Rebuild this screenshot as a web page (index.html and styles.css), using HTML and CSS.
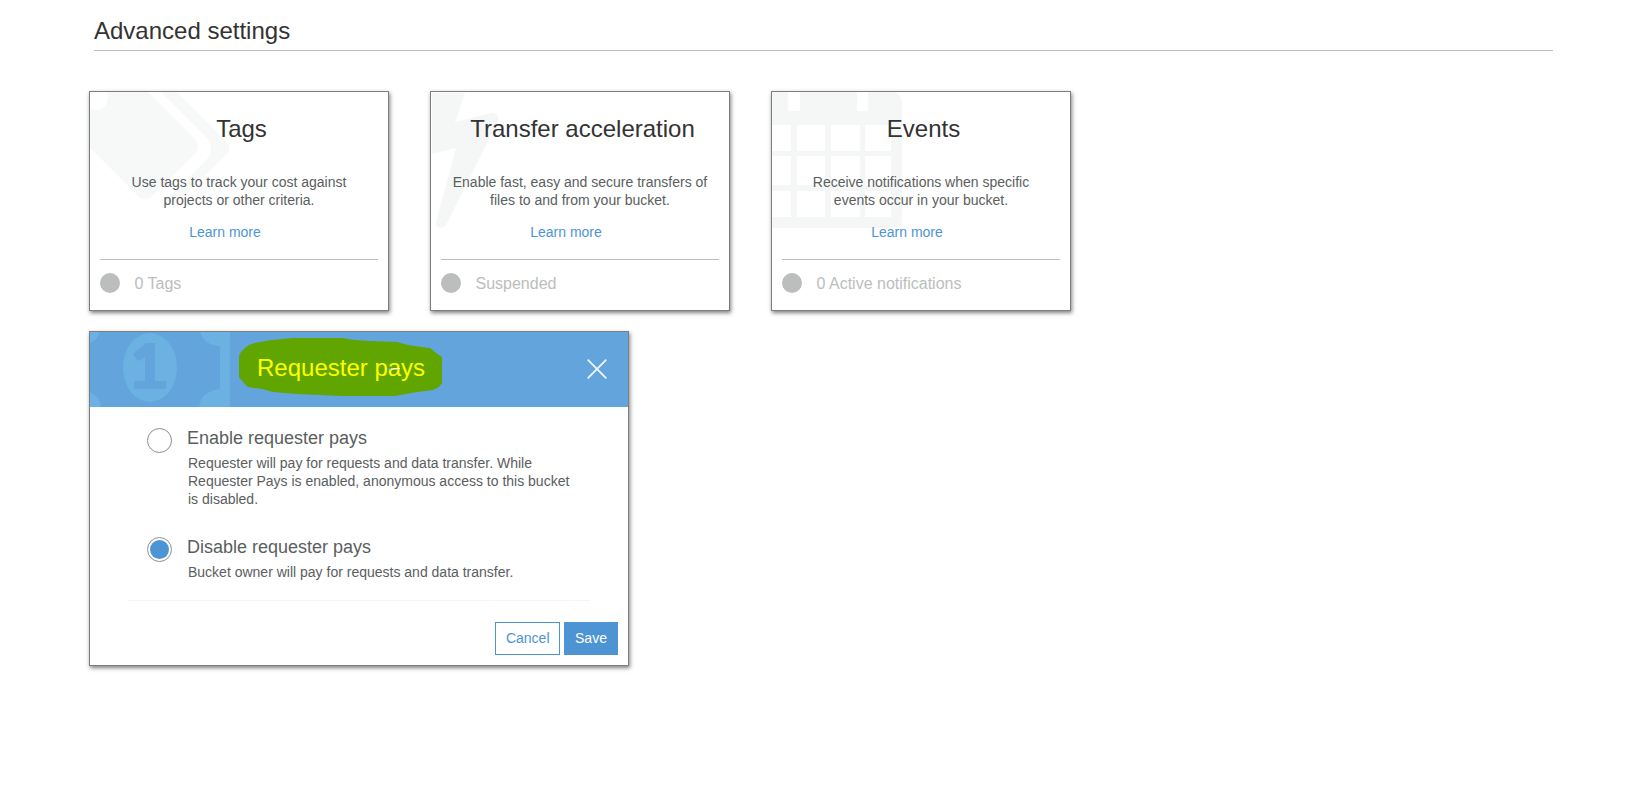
FILE: index.html
```html
<!DOCTYPE html>
<html lang="en">
<head>
<meta charset="utf-8">
<title>Advanced settings</title>
<link rel="stylesheet" href="styles.css">
</head>
<body>
<main class="page">
  <h1 class="heading">Advanced settings</h1>
  <section class="cards">
    <article class="card">
      <svg class="art" width="140" height="140" viewBox="0 0 140 140" fill="#f7f9f8">
        <path d="M0 15Q3 18 8 18A10 13 0 0 0 17 0H58L104 46Q112 54 104 63L62 104Q55 111 48 104L0 56Z"/>
        <path d="M71 0H87L136 49Q143 56 136 63L92 106Q81 117 69 110L74 106Q79 105 84 100L117 67Q125 58 117 46Z"/>
      </svg>
      <h2 class="title">Tags</h2>
      <p class="text">Use tags to track your cost against<br>projects or other criteria.</p>
      <a class="more">Learn more</a>
      <footer class="status"><span class="dot"></span><span class="state">0 Tags</span></footer>
    </article>
    <article class="card">
      <svg class="art" width="140" height="140" viewBox="0 0 140 140" fill="#f5f7f6">
        <path d="M1 1H34L24 30L60 21Q70 21 66 31L15 133Q11 138 5 134L5 130L25 56L1 62Z"/>
      </svg>
      <h2 class="title">Transfer acceleration</h2>
      <p class="text">Enable fast, easy and secure transfers of<br>files to and from your bucket.</p>
      <a class="more">Learn more</a>
      <footer class="status"><span class="dot"></span><span class="state">Suspended</span></footer>
    </article>
    <article class="card">
      <svg class="art" width="140" height="140" viewBox="0 0 140 140">
        <path fill="#f5f7f6" d="M0 0H122Q130 2 130 11V128Q130 135 122 136H0Z"/>
        <path fill="#fff" d="M16 0H28V17Q28 19 26 19H18Q16 19 16 17ZM85 0H96V17Q96 19 94 19H87Q85 19 85 17ZM0 33H19V59H0ZM25 33H53V59H25ZM59 33H88V59H59ZM93 33H119V59H93ZM0 64H19V93H0ZM25 64H53V93H25ZM59 64H88V93H59ZM93 64H119V93H93ZM0 99H19V125H0ZM25 99H53V125H25ZM59 99H88V125H59ZM93 99H119V125H93Z"/>
      </svg>
      <h2 class="title">Events</h2>
      <p class="text">Receive notifications when specific<br>events occur in your bucket.</p>
      <a class="more">Learn more</a>
      <footer class="status"><span class="dot"></span><span class="state">0 Active notifications</span></footer>
    </article>
  </section>
  <section class="panel">
    <header class="panel-head">
      <svg class="art" width="400" height="75" viewBox="0 0 400 75">
        <g fill="#6bb1e1">
          <path d="M0 0H10Q7 9 0 11ZM0 60Q10 64 11 75H0ZM110 0H140V75H109Q111 59 130 57V14Q115 14 110 0Z"/>
          <ellipse cx="60" cy="35.500" rx="27" ry="34.500"/>
        </g>
        <path fill="#62a4db" d="M56 11H65V49H76V57H44V49H55V25L48 29L43 22Z"/>
        <path fill="#60a500" d="M149 24L151 20L155 16L159 13L165 11L182 8L203 6H253L264 8L280 9L307 10L318 13L331 15L340 16L346 21L352 25V51L349 55L343 58L327 60L305 64H253L230 63L207 62L183 60L172 57L158 55L153 50L149 45Z"/>
      </svg>
      <h2 class="panel-title">Requester pays</h2>
      <svg class="mark" width="16" height="4" viewBox="0 0 16 4"><path d="M1 2L7 1.500" stroke="#62a4db"/><path d="M5 2L14 1.500" stroke="#fff"/></svg>
      <svg class="close" width="20" height="20" viewBox="0 0 20 20"><path d="M.7 .7L19.300 19.300M19.300 .7L.7 19.300" stroke="#fff" stroke-opacity=".9" stroke-width="1.800"/></svg>
    </header>
    <div class="options">
      <div class="option">
        <span class="radio"></span>
        <div>
          <div class="label">Enable requester pays</div>
          <p class="note">Requester will pay for requests and data transfer. While<br>Requester Pays is enabled, anonymous access to this bucket<br>is disabled.</p>
        </div>
      </div>
      <div class="option">
        <span class="radio checked"></span>
        <div>
          <div class="label">Disable requester pays</div>
          <p class="note">Bucket owner will pay for requests and data transfer.</p>
        </div>
      </div>
    </div>
    <footer class="actions"><button class="btn">Cancel</button><button class="btn primary">Save</button></footer>
  </section>
</main>
</body>
</html>
```
FILE: styles.css
```css
* { box-sizing: border-box; }
body { margin: 0; background: #fff; color: #5a5e60; font: 14px/18px "Liberation Sans", Arial, sans-serif; }
h1, h2, p { margin: 0; font-weight: 400; }
.page { min-height: 100vh; padding: 17px 76px 0 89px; }
.heading { margin-left: 5px; height: 34px; border-bottom: 1px solid #bbbebd; font-size: 24px; line-height: 28px; color: #333; }
.cards { display: flex; gap: 41px; margin-top: 40px; }
.card, .panel { position: relative; border: 1px solid #7c7f7e; background: #fff; box-shadow: 1px 2px 4px rgba(0, 0, 0, .5); }
.card { width: 300px; height: 220px; padding: 23px 10px 0; display: flex; flex-direction: column; }
.art { position: absolute; left: 0; top: 0; }
.title { position: relative; padding-left: 5px; text-align: center; font-size: 24px; line-height: 28px; color: #333; }
.text { position: relative; margin-top: 30px; text-align: center; }
.more { position: relative; margin-top: 14px; padding-right: 28px; text-align: center; color: #4d94d4; }
.status { display: flex; align-items: flex-start; gap: 14.5px; margin-top: 18px; padding-top: 13px; border-top: 1px solid #bbbebd; font-size: 16px; line-height: 20px; color: #bbbebd; }
.dot { width: 20px; height: 20px; border-radius: 50%; background: #bbbebd; }
.state { padding-top: 1px; }
.panel { width: 540px; height: 335px; margin-top: 20px; }
.panel-head { position: relative; height: 75px; padding: 22px 21px 0 167px; background: #62a4db; display: flex; justify-content: space-between; align-items: flex-start; }
.panel-title { position: relative; font-size: 24px; line-height: 28px; color: #ff0; }
.mark { position: absolute; left: 296px; top: 35px; }
.close { margin-top: 5px; }
.options { display: flex; flex-direction: column; gap: 29px; margin: 0 38px 0 37px; padding: 21px 0 19px 20px; border-bottom: 1px solid #f4f5f5; }
.option { display: flex; gap: 15px; }
.radio { flex: none; width: 25px; height: 25px; border: 1px solid #879196; border-radius: 50%; }
.checked { padding: 2px; background: #4d94d4 content-box; }
.label { font-size: 18px; line-height: 20px; }
.note { padding: 6px 0 0 1px; }
.actions { display: flex; justify-content: flex-end; gap: 4px; padding: 21px 10px 0 0; }
.btn { height: 33px; padding: 0 9.5px 2px; border: 1px solid #4d94d4; background: #fff; color: #4d94d4; font: inherit; }
.primary { width: 54px; background: #4d94d4; color: #fff; }
```
